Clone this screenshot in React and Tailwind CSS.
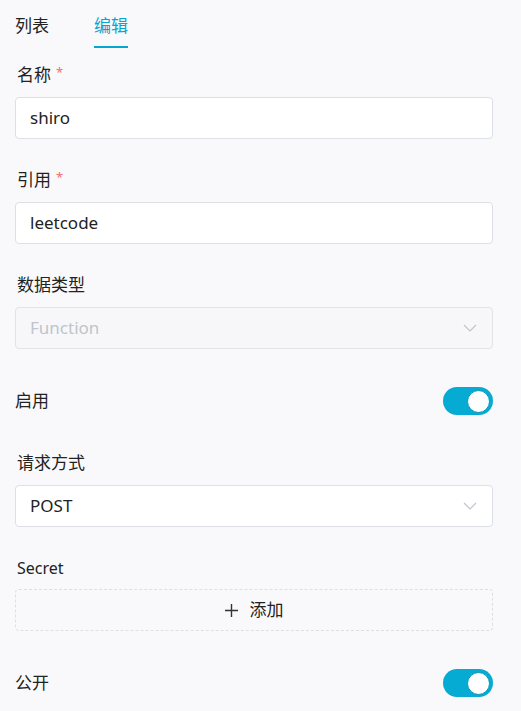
import { useState } from 'react';

const font = { fontFamily: '"Noto Sans", "Noto Sans CJK SC", sans-serif' };

const Chevron = () => (
  <svg width="14" height="8" viewBox="0 0 14 8" fill="none" className="text-[#c0c4cc]">
    <path d="M1 1l6 6 6-6" stroke="currentColor" strokeWidth="1.2" />
  </svg>
);

const Label = ({ children, required }) => (
  <div className="h-[22px] leading-[22px] mb-[11px] pl-[2px] text-[17px] text-[#222]">
    {children}
    {required && <span className="text-[#f56c6c] text-[13px] ml-[5px] relative -top-[4px]">*</span>}
  </div>
);

const Switch = ({ on, onToggle }) => (
  <button
    onClick={onToggle}
    className={`w-[50px] h-[28px] rounded-full flex items-center px-[3px] ${on ? 'bg-[#05abd3] justify-end' : 'bg-[#dcdfe6] justify-start'}`}
  >
    <span className="w-[23px] h-[23px] rounded-full bg-white border-[1.5px] border-[#0494b7]" />
  </button>
);

export default function App() {
  const [tab, setTab] = useState('edit');
  const [enabled, setEnabled] = useState(true);
  const [pub, setPub] = useState(true);

  return (
    <div className="min-h-screen bg-[#f9f9fb] px-[15px] w-[521px]" style={font}>
      {/* tabs */}
      <div className="flex gap-[45px] pt-[14px]">
        <button onClick={() => setTab('list')} className="flex flex-col">
          <span className={`text-[17px] leading-[24px] ${tab === 'list' ? 'text-[#05a6d0]' : 'text-[#222]'}`}>列表</span>
          <span className={`mt-[8px] h-[2px] ${tab === 'list' ? 'bg-[#05a6d0]' : 'bg-transparent'}`} />
        </button>
        <button onClick={() => setTab('edit')} className="flex flex-col">
          <span className={`text-[17px] leading-[24px] ${tab === 'edit' ? 'text-[#05a6d0]' : 'text-[#222]'}`}>编辑</span>
          <span className={`mt-[8px] h-[2px] ${tab === 'edit' ? 'bg-[#05a6d0]' : 'bg-transparent'}`} />
        </button>
      </div>

      <div className="mt-[16px] w-[478px]">
        <div className="mb-[30px]">
          <Label required>名称</Label>
          <div className="h-[42px] border border-[#dcdfe6] rounded-[4px] bg-white flex items-center px-[14px] text-[17px] text-[#222]">shiro</div>
        </div>

        <div className="mb-[30px]">
          <Label required>引用</Label>
          <div className="h-[42px] border border-[#dcdfe6] rounded-[4px] bg-white flex items-center px-[14px] text-[17px] text-[#222]">leetcode</div>
        </div>

        <div className="mb-[30px]">
          <Label>数据类型</Label>
          <div className="h-[42px] border border-[#e1e3e8] rounded-[4px] bg-[#f7f7f9] flex items-center justify-between pl-[14px] pr-[15px] text-[17px] text-[#c0c4cc]">
            <span>Function</span>
            <Chevron />
          </div>
        </div>

        <div className="h-[44px] flex items-center justify-between mb-[29px]">
          <span className="text-[17px] text-[#222]">启用</span>
          <Switch on={enabled} onToggle={() => setEnabled(!enabled)} />
        </div>

        <div className="mb-[30px]">
          <Label>请求方式</Label>
          <div className="h-[42px] border border-[#dcdfe6] rounded-[4px] bg-white flex items-center justify-between pl-[14px] pr-[15px] text-[17px] text-[#222]">
            <span>POST</span>
            <Chevron />
          </div>
        </div>

        <div className="mb-[30px]">
          <div className="h-[22px] leading-[22px] mb-[10px] pl-[2px] text-[16px] text-[#222]">Secret</div>
          <button className="w-full h-[42px] border border-dashed border-[#dcdfe6] rounded-[4px] flex items-center justify-center gap-[12px] text-[17px] text-[#222]">
            <svg width="13" height="13" viewBox="0 0 13 13" fill="none">
              <path d="M6.5 0v13M0 6.5h13" stroke="#333" strokeWidth="1.4" />
            </svg>
            <span>添加</span>
          </button>
        </div>

        <div className="h-[44px] flex items-center justify-between">
          <span className="text-[17px] text-[#222]">公开</span>
          <Switch on={pub} onToggle={() => setPub(!pub)} />
        </div>
      </div>
    </div>
  );
}
